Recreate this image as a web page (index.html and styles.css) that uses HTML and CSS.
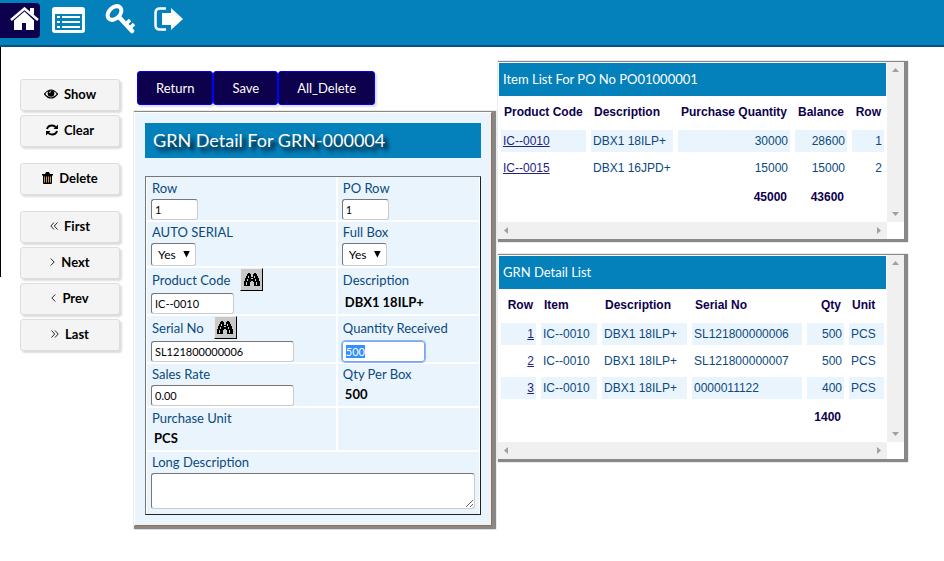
FILE: index.html
```html
<!DOCTYPE html>
<html lang="en">
<head>
<meta charset="utf-8">
<meta name="viewport" content="width=device-width, initial-scale=1">
<title>GRN Detail</title>
<link rel="stylesheet" href="styles.css">
</head>
<body>
<svg class="sprite" aria-hidden="true">
  <symbol id="binoculars" viewBox="0 0 16 14">
    <path d="M4 0h2v1h1v3h2V1h1V0h2v1h1v2h1v2h1v3h1v5h-6V9H9V8H7v1H6v4H0V8h1V5h1V3h1V1h1z" fill="#000"/>
    <path d="M4 3h1v2H4zM3 6h1v2H3zM2 9h1v3H2zM10 3h1v2h-1zM11 6h1v2h-1zM12 9h1v3h-1zM7 5h2v1H7z" fill="#ccc"/>
  </symbol>
</svg>
<header class="topbar">
  <nav class="topnav" aria-label="Main">
    <a class="topnav-home" href="#" aria-label="Home">
      <svg width="29" height="24" viewBox="0 0 29 24"><path d="M14.500 4.500 4 13.500V23h8v-7h4v7h8v-9.500z" fill="#fff"/><path d="M1 13 14.500 1.500 28 13" fill="none" stroke="#fff" stroke-width="2.500"/><path d="M20 1h4v7l-4-3z" fill="#fff"/></svg>
    </a>
    <a class="topnav-link" href="#" aria-label="List">
      <svg width="33" height="26" viewBox="0 0 33 26"><rect width="33" height="26" rx="3" fill="#fff"/><path d="M3 7h27v16H3z" fill="#0480bb"/><path d="M5 9h3v2H5zM10 9h18v2H10zM5 14h3v2H5zM10 14h18v2H10zM5 19h3v2H5zM10 19h18v2H10z" fill="#fff"/></svg>
    </a>
    <a class="topnav-link topnav-key" href="#" aria-label="Key">
      <svg width="31" height="30" viewBox="0 0 31 30"><g fill="none" stroke="#fff"><ellipse cx="9.500" cy="9" rx="8" ry="5.500" transform="rotate(-45 9.500 9)" stroke-width="4"/><path d="M14 13 27 27" stroke-width="4.500" stroke-linecap="round"/><path d="m21 20 4-4M25 24l4-4" stroke-width="3.500"/></g></svg>
    </a>
    <a class="topnav-link" href="#" aria-label="Sign out">
      <svg width="29" height="24" viewBox="0 0 29 24"><path d="M12 1.500H6Q1.500 1.500 1.500 6v12q0 4.500 4.500 4.500h6" fill="none" stroke="#fff" stroke-width="2.500"/><path d="M8 6h9V1l12 11-12 11v-5H8z" fill="#fff"/></svg>
    </a>
  </nav>
</header>
<main class="page">
  <div class="sidebar">
    <div class="button-group">
      <button type="button" class="side-button"><svg width="14" height="10" viewBox="0 0 14 10"><path d="M.5 5Q7-3 13.500 5 7 13 .5 5z" fill="none" stroke="#000" stroke-width="1.200"/><circle cx="7" cy="4.500" r="3.300"/><path d="M5.500 4q0-1.500 1.500-1.500" fill="none" stroke="#fff" stroke-width=".8"/></svg>Show</button>
      <button type="button" class="side-button"><svg width="12" height="12" viewBox="0 0 12 12"><path d="M1 5Q2 1.500 6 1.500q2.500 0 4 2M11 7q-1 3.500-5 3.500-2.500 0-4-2" fill="none" stroke="#000" stroke-width="2"/><path d="M12 .5V5H7.500zM0 11.500V7h4.500z"/></svg>Clear</button>
    </div>
    <div class="button-group">
      <button type="button" class="side-button"><svg width="11" height="12" viewBox="0 0 11 12"><path d="M4 0h3l1 2h3v1.500H0V2h3zM1 3h9v8q0 1-1 1H2q-1 0-1-1z"/><path d="M2.500 4.500v6M4.500 4.500v6M6.500 4.500v6M8.500 4.500v6" stroke="#c89b45"/></svg>Delete</button>
    </div>
    <div class="button-group">
      <button type="button" class="side-button"><svg width="8" height="8" viewBox="0 0 8 8"><path d="M4 .5.8 4 4 7.500M7.500.5 4.300 4l3.200 3.500" class="chevron"/></svg>First</button>
      <button type="button" class="side-button"><svg width="5" height="8" viewBox="0 0 5 8"><path d="M.7.5 4.200 4 .7 7.500" class="chevron"/></svg>Next</button>
      <button type="button" class="side-button"><svg width="5" height="8" viewBox="0 0 5 8"><path d="M4.300.5.8 4l3.500 3.500" class="chevron"/></svg>Prev</button>
      <button type="button" class="side-button"><svg width="8" height="8" viewBox="0 0 8 8"><path d="M.5.5 3.700 4 .5 7.500M4 .5 7.200 4 4 7.500" class="chevron"/></svg>Last</button>
    </div>
  </div>

  <div class="form-column">
    <div class="actions">
      <button type="button" class="action">Return</button>
      <button type="button" class="action">Save</button>
      <button type="button" class="action">All_Delete</button>
    </div>
    <section class="panel form-panel">
      <h1 class="form-title">GRN Detail For GRN-000004</h1>
      <form class="fields">
        <div class="field"><label for="row">Row</label><input id="row" class="short" type="text" value="1"></div>
        <div class="field"><label for="po-row">PO Row</label><input id="po-row" class="short" type="text" value="1"></div>
        <div class="field"><label for="auto">AUTO SERIAL</label><span class="select"><select id="auto"><option>Yes</option><option>No</option></select></span></div>
        <div class="field"><label for="full">Full Box</label><span class="select"><select id="full"><option>Yes</option><option>No</option></select></span></div>
        <div class="field tall"><div class="lookup"><label for="code">Product Code</label><button type="button" aria-label="Find product"><svg width="16" height="14"><use href="#binoculars"/></svg></button></div><input id="code" class="medium" type="text" value="IC--0010"></div>
        <div class="field tall"><label for="description">Description</label><output id="description">DBX1 18ILP+</output></div>
        <div class="field tall"><div class="lookup"><label for="serial">Serial No</label><button type="button" aria-label="Find serial"><svg width="16" height="14"><use href="#binoculars"/></svg></button></div><input id="serial" class="long" type="text" value="SL121800000006"></div>
        <div class="field tall"><label for="quantity">Quantity Received</label><input id="quantity" class="medium" type="text" value="500" autofocus></div>
        <div class="field"><label for="rate">Sales Rate</label><input id="rate" class="long" type="text" value="0.00"></div>
        <div class="field"><label for="per-box">Qty Per Box</label><output id="per-box">500</output></div>
        <div class="field"><label for="unit">Purchase Unit</label><output id="unit">PCS</output></div>
        <div class="field"></div>
        <div class="field wide"><label for="long-description">Long Description</label><textarea id="long-description"></textarea></div>
      </form>
    </section>
  </div>

  <div class="lists">
    <section class="panel list-panel">
      <div class="list-content">
        <h2 class="list-title">Item List For PO No PO01000001</h2>
        <table class="list item-list">
          <colgroup><col class="item-code"><col class="item-description"><col class="item-quantity"><col class="item-balance"><col class="item-row"></colgroup>
          <thead><tr><th>Product Code</th><th>Description</th><th class="num">Purchase Quantity</th><th class="num">Balance</th><th class="num">Row</th></tr></thead>
          <tbody>
            <tr><td><a href="#">IC--0010</a></td><td>DBX1 18ILP+</td><td class="num">30000</td><td class="num">28600</td><td class="num">1</td></tr>
            <tr><td><a href="#">IC--0015</a></td><td>DBX1 16JPD+</td><td class="num">15000</td><td class="num">15000</td><td class="num">2</td></tr>
          </tbody>
          <tfoot><tr><td></td><td></td><td class="num">45000</td><td class="num">43600</td><td></td></tr></tfoot>
        </table>
      </div>
      <div class="track vertical"><svg width="7" height="4"><path d="M0 4h7L3.500 0z"/></svg><svg width="7" height="4"><path d="M0 0h7L3.500 4z"/></svg></div>
      <div class="track"><svg width="4" height="7"><path d="M4 0v7L0 3.500z"/></svg><svg width="4" height="7"><path d="M0 0v7l4-3.500z"/></svg></div>
    </section>
    <section class="panel list-panel">
      <div class="list-content">
        <h2 class="list-title">GRN Detail List</h2>
        <table class="list">
          <colgroup><col class="grn-row"><col class="grn-item"><col class="grn-description"><col class="grn-serial"><col class="grn-quantity"><col class="grn-unit"></colgroup>
          <thead><tr><th class="num">Row</th><th>Item</th><th>Description</th><th>Serial No</th><th class="num">Qty</th><th>Unit</th></tr></thead>
          <tbody>
            <tr><td class="num"><a href="#">1</a></td><td>IC--0010</td><td>DBX1 18ILP+</td><td>SL121800000006</td><td class="num">500</td><td>PCS</td></tr>
            <tr><td class="num"><a href="#">2</a></td><td>IC--0010</td><td>DBX1 18ILP+</td><td>SL121800000007</td><td class="num">500</td><td>PCS</td></tr>
            <tr><td class="num"><a href="#">3</a></td><td>IC--0010</td><td>DBX1 18ILP+</td><td>0000011122</td><td class="num">400</td><td>PCS</td></tr>
          </tbody>
          <tfoot><tr><td></td><td></td><td></td><td></td><td class="num">1400</td><td></td></tr></tfoot>
        </table>
      </div>
      <div class="track vertical"><svg width="7" height="4"><path d="M0 4h7L3.500 0z"/></svg><svg width="7" height="4"><path d="M0 0h7L3.500 4z"/></svg></div>
      <div class="track"><svg width="4" height="7"><path d="M4 0v7L0 3.500z"/></svg><svg width="4" height="7"><path d="M0 0v7l4-3.500z"/></svg></div>
    </section>
  </div>
</main>
<script src="script.js"></script>
</body>
</html>
```
FILE: script.js
```js
const quantity = document.getElementById("quantity");
quantity.focus();
quantity.select();
```
FILE: styles.css
```css
* {
  box-sizing: border-box;
}

body {
  margin: 0;
  background: #fff;
  color: #000;
  font: 13px/20px Lato, sans-serif;
}

button, input, select, textarea {
  font: inherit;
}

.sprite {
  display: none;
}

.topbar {
  height: 47px;
  background: #0480bb;
  border-bottom: 2px solid #04527f;
}

.topnav {
  display: flex;
  align-items: flex-start;
  padding-top: 3px;
}

.topnav a {
  display: flex;
}

.topnav-home {
  padding: 4px 1px 7px 10px;
  background: #0d004c;
  border-radius: 0 4px 4px 0;
}

.topnav-link {
  padding: 4px 0 0 12px;
}

.topnav-link + .topnav-link {
  padding-left: 18px;
}

.topnav-link.topnav-key {
  padding: 1px 0 0 20px;
}

/* The left rule beside the sidebar ends partway down the page. */
.page {
  display: grid;
  grid-template-columns: 100px minmax(0, 372fr) minmax(0, 412fr);
  align-items: start;
  padding: 0 40px 24px 20px;
  background: linear-gradient(#000, #000) 0 0 / 1px 230px no-repeat;
}

.sidebar {
  display: grid;
  gap: 16px;
  padding-top: 32px;
}

.button-group {
  display: grid;
  gap: 4px;
}

.side-button {
  display: flex;
  align-items: center;
  justify-content: center;
  gap: 6px;
  height: 32px;
  padding: 0 0 2px;
  border: 1px solid #ddd;
  border-radius: 3px;
  background: #f4f4f4;
  box-shadow: 2px 2px 2px #ddd;
  color: #000;
  font-weight: 700;
}

.chevron {
  fill: none;
  stroke: #223;
}

.form-column {
  margin-left: 14px;
  padding-top: 24px;
}

.actions {
  display: flex;
  padding-left: 3px;
  margin-bottom: 7px;
}

.action {
  height: 34px;
  padding: 0 18px;
  border: 1px solid #00f;
  border-radius: 3px;
  background: #0d004c;
  box-shadow: 2px 2px 2px #ddd;
  color: #fff;
}

.panel {
  box-shadow: 2px 1px 1px 2px #888;
}

.form-panel {
  padding: 10px;
  border: 1px solid #fff;
  border-right-color: #9a6b45;
  border-bottom-color: #9a6b45;
  background: #eaf4fc;
  box-shadow: 2px 1px 1px 2px #888, 2px 3px 1px #888;
}

.form-title {
  margin: 0 0 18px;
  padding: 0 8px;
  background: #0480bb;
  color: #fff;
  font-size: 18px;
  font-weight: 400;
  line-height: 35px;
  text-shadow: 4px 4px 4px #000;
}

.fields {
  display: grid;
  grid-template-columns: 190fr 142fr;
  gap: 2px;
  padding: 0 1px;
  border: 1px solid #222;
  border-top-color: #777;
  border-left-color: #777;
  background: #fff;
}

.field {
  display: flex;
  flex-direction: column;
  align-items: flex-start;
  min-height: 42px;
  padding: 0 4px;
  background: #eaf4fc;
}

.field:nth-child(-n + 2) {
  padding-top: 1px;
}

.wide {
  grid-column: 1 / -1;
  padding-bottom: 5px;
}

label {
  padding-left: 1px;
  color: #0a4a80;
}

.tall label {
  line-height: 24px;
}

.lookup {
  display: flex;
  gap: 10px;
}

.lookup button {
  display: grid;
  place-items: center;
  width: 23px;
  height: 23px;
  margin-bottom: 1px;
  padding: 0;
  border: 1px solid #eee;
  border-right-color: #000;
  border-bottom-color: #000;
  background: #c8c8c8;
}

input, select, textarea {
  margin: 1px 0 0;
  border: 1px solid #ccc;
  border-top-color: #777;
  border-left-color: #777;
  border-radius: 3px;
  background: #fff;
  color: #000;
}

input {
  height: 21px;
  padding: 0 3px;
  font-size: 11px;
}

.short {
  width: 47px;
}

.medium {
  width: 83px;
}

.long {
  width: 143px;
}

input:focus {
  border-color: #7aa7f5;
  outline: 1px solid #8fb5f5;
}

input::selection {
  background: #3390ff;
  color: #fff;
}

.select {
  display: grid;
  align-items: center;
}

.select::after {
  content: "";
  grid-area: 1 / 1;
  justify-self: end;
  width: 7px;
  height: 7px;
  margin-right: 6px;
  background: #000;
  clip-path: polygon(0 0, 100% 0, 50% 100%);
  pointer-events: none;
}

select {
  grid-area: 1 / 1;
  width: 45px;
  height: 23px;
  padding: 0 6px;
  appearance: none;
  font-size: 12px;
}

output {
  padding-left: 3px;
  font-weight: 700;
}

textarea {
  width: 100%;
  height: 36px;
}

.lists {
  display: grid;
  gap: 16px;
  margin-left: 6px;
  padding-top: 15px;
}

.list-panel {
  display: grid;
  grid-template-columns: minmax(0, 1fr) 17px;
  grid-template-rows: auto 17px;
  background: #fff;
}

.list-content {
  padding: 1px 1px 7px;
}

.list-title {
  margin: 0;
  padding: 0 4px;
  background: #0480bb;
  color: #fff;
  font-size: 13px;
  font-weight: 400;
  line-height: 33px;
}

.list {
  width: calc(100% + 6px);
  margin: 0 -3px;
  border-spacing: 5px;
  table-layout: fixed;
  color: #0a4a80;
  font: 12px/22px "Liberation Sans", sans-serif;
}

.list th {
  padding: 0 3px 2px;
  color: #0d004c;
  text-align: left;
  white-space: nowrap;
}

.list td {
  height: 22px;
  padding: 0 2px;
}

.list .num {
  text-align: right;
}

.list tbody tr:nth-child(odd) td {
  background: #eaf4fc;
}

.list tfoot td {
  height: 26px;
  padding: 0 3px;
  color: #0d004c;
  font-weight: 700;
}

.list a {
  color: #23237f;
}

.item-code { width: 85px; }
.item-description { width: 82px; }
.item-balance { width: 52px; }
.item-row { width: 32px; }
.grn-row { width: 35px; }
.grn-item { width: 56px; }
.grn-description { width: 85px; }
.grn-quantity { width: 37px; }
.grn-unit { width: 35px; }

.track {
  display: flex;
  align-items: center;
  justify-content: space-between;
  padding: 0 6px;
  background: #f0f0f0;
  fill: #a0a0a0;
}

.vertical {
  flex-direction: column;
  padding: 6px 0;
}
```
